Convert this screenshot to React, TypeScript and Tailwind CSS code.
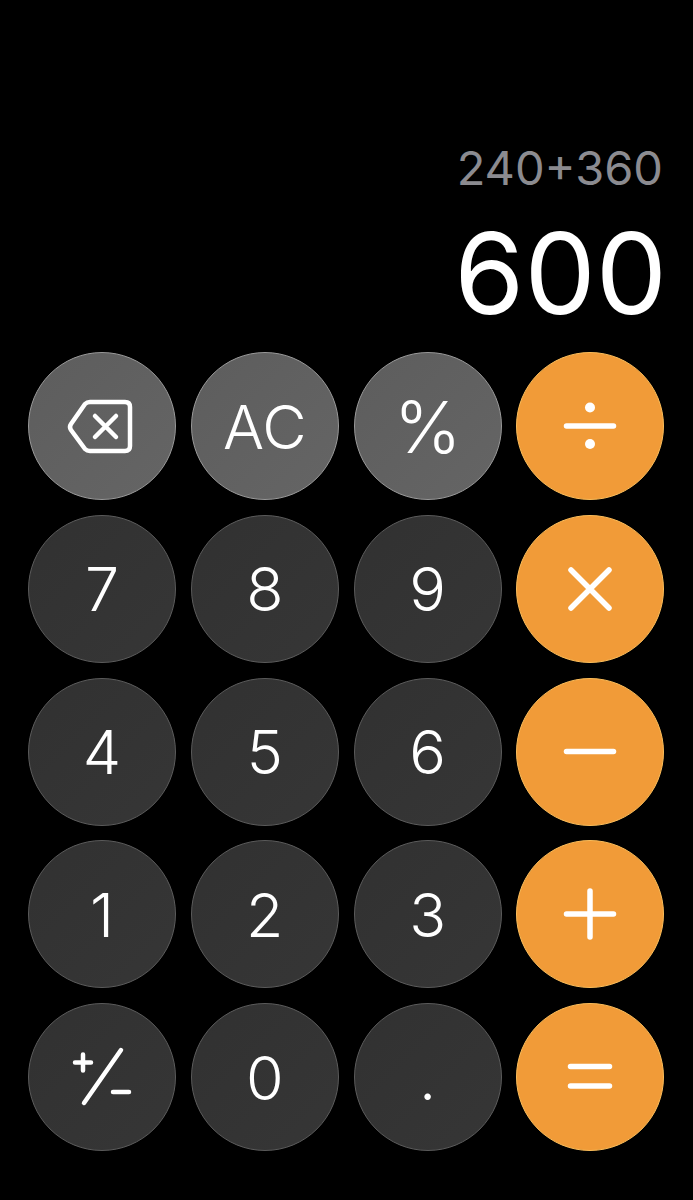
import type { ReactNode } from 'react'

type Tone = 'light' | 'dark' | 'orange'

const TONES: Record<Tone, string> = {
  light: 'bg-gradient-to-br from-[#5d5d5d] to-[#656565] border-[#9a9a9a]',
  dark: 'bg-gradient-to-br from-[#313131] to-[#363636] border-[#5c5c5c]',
  orange: 'bg-[#f19b38] border-[#fbbd5a]',
}

// stroke-drawn glyphs, viewBox matches the 148px button
const Glyph = ({ children }: { children: ReactNode }) => (
  <svg viewBox="0 0 148 148" className="size-[148px] shrink-0" fill="none" stroke="#fff" strokeLinecap="round" strokeLinejoin="round">
    {children}
  </svg>
)

const Backspace = () => (
  <Glyph>
    <path strokeWidth="4.5" d="M62 50H97Q102 50 102 55V94Q102 99 97 99H62Q59 99 57 97L43 78Q41 75 43 72L57 52Q59 50 62 50Z" />
    <path strokeWidth="4.5" d="M67 64L88 85M88 64L67 85" />
  </Glyph>
)

const PlusMinus = () => (
  <Glyph>
    <path strokeWidth="4.5" d="M47 59.5H63M55 51.5V67.5M93 47L56 100M85 89H101" />
  </Glyph>
)

const Divide = () => (
  <Glyph>
    <path strokeWidth="5.5" d="M50.5 74H97.5" />
    <circle cx="74" cy="55.5" r="5" fill="#fff" stroke="none" />
    <circle cx="74" cy="92" r="5" fill="#fff" stroke="none" />
  </Glyph>
)

const Times = () => (
  <Glyph>
    <path strokeWidth="5.5" d="M55 55L93 93M93 55L55 93" />
  </Glyph>
)

const Minus = () => (
  <Glyph>
    <path strokeWidth="5.5" d="M50.5 73.5H97.5" />
  </Glyph>
)

const Plus = () => (
  <Glyph>
    <path strokeWidth="5.5" d="M50.5 74H97.5M74 51V97" />
  </Glyph>
)

const Equals = () => (
  <Glyph>
    <path strokeWidth="5.5" d="M54.5 63.5H93.5M54.5 83H93.5" />
  </Glyph>
)

const KEYS: { tone: Tone; label: ReactNode; size?: string }[] = [
  { tone: 'light', label: <Backspace /> },
  { tone: 'light', label: 'AC' },
  { tone: 'light', label: '%', size: 'text-[72px] font-light' },
  { tone: 'orange', label: <Divide /> },
  { tone: 'dark', label: '7' },
  { tone: 'dark', label: '8' },
  { tone: 'dark', label: '9' },
  { tone: 'orange', label: <Times /> },
  { tone: 'dark', label: '4' },
  { tone: 'dark', label: '5' },
  { tone: 'dark', label: '6' },
  { tone: 'orange', label: <Minus /> },
  { tone: 'dark', label: '1' },
  { tone: 'dark', label: '2' },
  { tone: 'dark', label: '3' },
  { tone: 'orange', label: <Plus /> },
  { tone: 'dark', label: <PlusMinus /> },
  { tone: 'dark', label: '0' },
  { tone: 'dark', label: '.' },
  { tone: 'orange', label: <Equals /> },
]

export default function App() {
  return (
    <div className="w-[693px] h-[1200px] bg-black overflow-hidden font-['Inter',sans-serif] text-white">
      <div className="h-[352px] pr-[26px] pt-[143px] flex flex-col items-end">
        <p className="text-[47px] leading-[50px] font-normal text-[#8b8b90] mr-[4px]">240+360</p>
        <p className="text-[113px] leading-[120px] font-[380] mt-[20px]">600</p>
      </div>
      <div className="grid grid-cols-[repeat(4,148px)] gap-x-[14.83px] gap-y-[14.75px] pl-[28px]">
        {KEYS.map((key, i) => (
          <button
            key={i}
            type="button"
            className={`size-[148px] rounded-full border flex items-center justify-center box-border overflow-hidden leading-none ${key.size ?? 'text-[61px] font-[350]'} ${TONES[key.tone]}`}
          >
            {typeof key.label === 'string' ? <span className="pt-[2px]">{key.label}</span> : key.label}
          </button>
        ))}
      </div>
    </div>
  )
}
